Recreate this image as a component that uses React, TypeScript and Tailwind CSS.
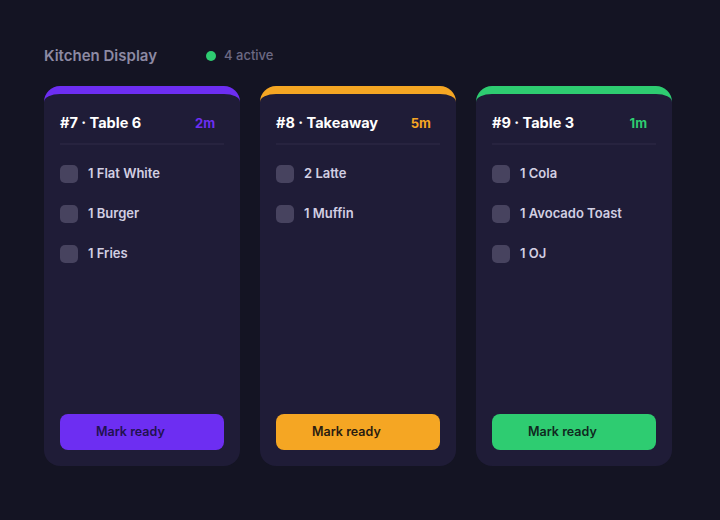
import React from "react";

type Order = {
  title: string;
  time: string;
  items: string[];
  border: string;
  timeColor: string;
  btn: string;
  btnText: string;
};

const orders: Order[] = [
  {
    title: "#7 · Table 6",
    time: "2m",
    items: ["1 Flat White", "1 Burger", "1 Fries"],
    border: "border-t-[#6d2ef2]",
    timeColor: "text-[#6d2ef2]",
    btn: "bg-[#6d2ef2]",
    btnText: "text-[#22124f]",
  },
  {
    title: "#8 · Takeaway",
    time: "5m",
    items: ["2 Latte", "1 Muffin"],
    border: "border-t-[#f5a623]",
    timeColor: "text-[#f5a623]",
    btn: "bg-[#f5a623]",
    btnText: "text-[#2a1c10]",
  },
  {
    title: "#9 · Table 3",
    time: "1m",
    items: ["1 Cola", "1 Avocado Toast", "1 OJ"],
    border: "border-t-[#2ecc71]",
    timeColor: "text-[#2ecc71]",
    btn: "bg-[#2ecc71]",
    btnText: "text-[#10291f]",
  },
];

function Card({ o }: { o: Order }) {
  return (
    <div
      className={`w-[196px] h-[380px] rounded-2xl border-t-8 ${o.border} bg-[#1f1c37] flex flex-col px-4 pb-4`}
    >
      <div className="flex items-center justify-between pt-[19px] pb-[10px] border-b-2 border-[#27233f]">
        <span className="text-[14.5px] leading-5 font-bold text-white">{o.title}</span>
        <span className={`text-[13px] leading-5 font-bold mr-[9px] ${o.timeColor}`}>{o.time}</span>
      </div>
      <div className="flex flex-col gap-[22px] pt-5">
        {o.items.map((it) => (
          <div key={it} className="flex items-center gap-[10px] h-[18px]">
            <div className="w-[18px] h-[18px] rounded-[5px] bg-[#47435f]" />
            <span className="text-[13px] font-semibold text-[#d2cfe2]">{it}</span>
          </div>
        ))}
      </div>
      <div className="flex-1" />
      <button
        className={`h-9 w-full rounded-lg ${o.btn} ${o.btnText} text-[12.5px] font-semibold text-left pl-9`}
      >
        Mark ready
      </button>
    </div>
  );
}

export default function App() {
  return (
    <div
      className="w-[720px] h-[520px] bg-[#141423] px-[44px] pt-[46px]"
      style={{ fontFamily: "Inter, 'Noto Sans', sans-serif" }}
    >
      <div className="flex items-center h-5">
        <span className="text-[15px] font-semibold text-[#8d8aa3]">Kitchen Display</span>
        <div className="ml-[49px] w-[10px] h-[10px] rounded-full bg-[#2ecc71]" />
        <span className="ml-[8px] text-[13px] font-medium text-[#6c6983]">4 active</span>
      </div>
      <div className="flex gap-5 mt-[20px]">
        {orders.map((o) => (
          <Card key={o.title} o={o} />
        ))}
      </div>
    </div>
  );
}
